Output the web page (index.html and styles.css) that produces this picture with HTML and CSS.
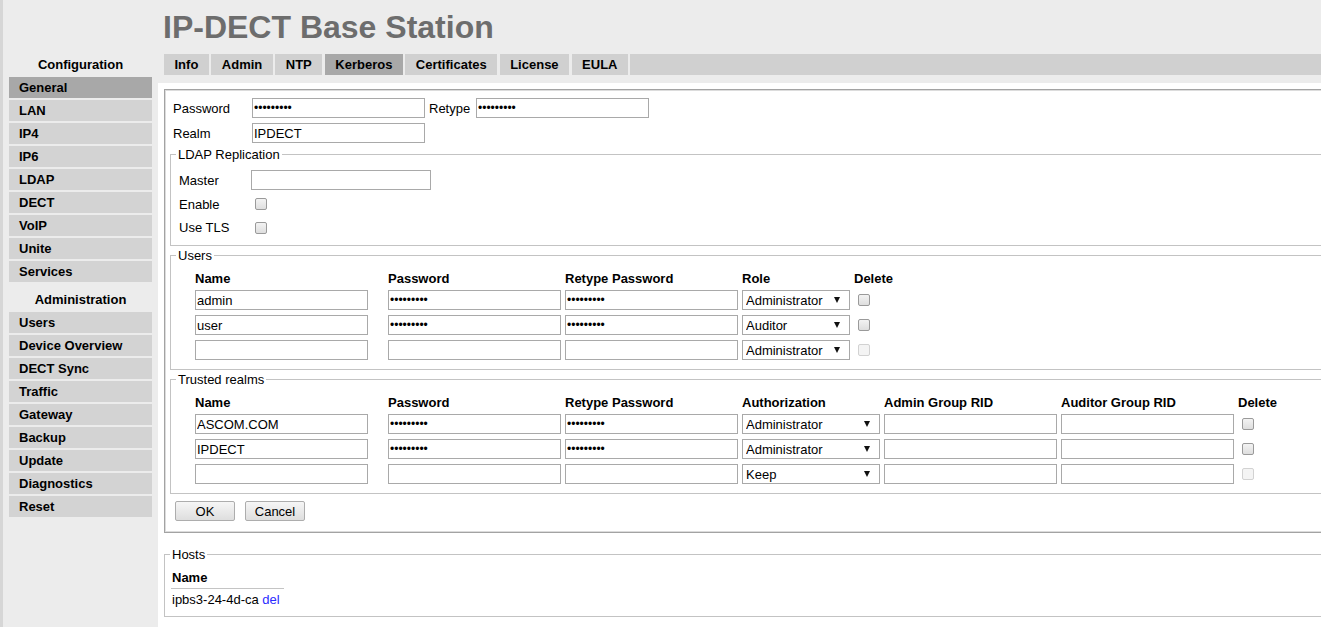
FILE: index.html
```html
<!DOCTYPE html>
<html lang="en">
<head>
<meta charset="utf-8">
<title>IP-DECT Base Station</title>
<link rel="stylesheet" href="styles.css">
</head>
<body>
<div class="page">
  <nav class="sidebar">
    <div class="side-head">Configuration</div>
    <ul class="side-list">
      <li class="active">General</li>
      <li>LAN</li>
      <li>IP4</li>
      <li>IP6</li>
      <li>LDAP</li>
      <li>DECT</li>
      <li>VoIP</li>
      <li>Unite</li>
      <li>Services</li>
    </ul>
    <div class="side-head second">Administration</div>
    <ul class="side-list">
      <li>Users</li>
      <li>Device Overview</li>
      <li>DECT Sync</li>
      <li>Traffic</li>
      <li>Gateway</li>
      <li>Backup</li>
      <li>Update</li>
      <li>Diagnostics</li>
      <li>Reset</li>
    </ul>
  </nav>
  <main class="main">
    <h1 class="title">IP-DECT Base Station</h1>
    <div class="tabs">
      <div class="tab">Info</div>
      <div class="tab">Admin</div>
      <div class="tab">NTP</div>
      <div class="tab active">Kerberos</div>
      <div class="tab">Certificates</div>
      <div class="tab">License</div>
      <div class="tab">EULA</div>
      <div class="tab-fill"></div>
    </div>
    <div class="content">
      <form class="kbox">
        <div class="cred">
          <span>Password</span>
          <input class="field" type="password" value="secret123">
          <span class="lbl2">Retype</span>
          <input class="field" type="password" value="secret123">
          <span>Realm</span>
          <input class="field" type="text" value="IPDECT">
        </div>
        <fieldset class="ldap">
          <legend>LDAP Replication</legend>
          <div class="ldap-grid">
            <span>Master</span>
            <input class="field master" type="text" value="">
            <span>Enable</span>
            <span><input class="chk" type="checkbox"></span>
            <span>Use TLS</span>
            <span><input class="chk" type="checkbox"></span>
          </div>
        </fieldset>
        <fieldset class="grp">
          <legend>Users</legend>
          <div class="grid users">
            <div class="th">Name</div>
            <div class="th">Password</div>
            <div class="th">Retype Password</div>
            <div class="th">Role</div>
            <div class="th">Delete</div>

            <input class="field" type="text" value="admin">
            <input class="field" type="password" value="secret123">
            <input class="field" type="password" value="secret123">
            <span class="sel w-role"><select><option>Administrator</option><option>Auditor</option></select></span>
            <span><input class="chk" type="checkbox"></span>

            <input class="field" type="text" value="user">
            <input class="field" type="password" value="secret123">
            <input class="field" type="password" value="secret123">
            <span class="sel w-role"><select><option>Auditor</option><option>Administrator</option></select></span>
            <span><input class="chk" type="checkbox"></span>

            <input class="field" type="text" value="">
            <input class="field" type="password" value="">
            <input class="field" type="password" value="">
            <span class="sel w-role"><select><option>Administrator</option><option>Auditor</option></select></span>
            <span><input class="chk" type="checkbox" disabled></span>
          </div>
        </fieldset>
        <fieldset class="grp">
          <legend>Trusted realms</legend>
          <div class="grid realms">
            <div class="th">Name</div>
            <div class="th">Password</div>
            <div class="th">Retype Password</div>
            <div class="th">Authorization</div>
            <div class="th">Admin Group RID</div>
            <div class="th">Auditor Group RID</div>
            <div class="th">Delete</div>

            <input class="field" type="text" value="ASCOM.COM">
            <input class="field" type="password" value="secret123">
            <input class="field" type="password" value="secret123">
            <span class="sel w-auth"><select><option>Administrator</option><option>Auditor</option><option>Keep</option></select></span>
            <input class="field" type="text" value="">
            <input class="field" type="text" value="">
            <span><input class="chk" type="checkbox"></span>

            <input class="field" type="text" value="IPDECT">
            <input class="field" type="password" value="secret123">
            <input class="field" type="password" value="secret123">
            <span class="sel w-auth"><select><option>Administrator</option><option>Auditor</option><option>Keep</option></select></span>
            <input class="field" type="text" value="">
            <input class="field" type="text" value="">
            <span><input class="chk" type="checkbox"></span>

            <input class="field" type="text" value="">
            <input class="field" type="password" value="">
            <input class="field" type="password" value="">
            <span class="sel w-auth"><select><option>Keep</option><option>Administrator</option><option>Auditor</option></select></span>
            <input class="field" type="text" value="">
            <input class="field" type="text" value="">
            <span><input class="chk" type="checkbox" disabled></span>
          </div>
        </fieldset>
        <div class="actions">
          <button type="button" class="btn">OK</button>
          <button type="button" class="btn">Cancel</button>
        </div>
      </form>
      <fieldset class="hosts">
        <legend>Hosts</legend>
        <table class="host-table">
          <thead><tr><th>Name</th></tr></thead>
          <tbody><tr><td>ipbs3-24-4d-ca <a href="#" class="del">del</a></td></tr></tbody>
        </table>
      </fieldset>
    </div>
  </main>
</div>
</body>
</html>
```

FILE: styles.css
```css
* { box-sizing: border-box; }
html, body { margin: 0; height: 100%; }
body {
  background: #ececec;
  font-family: "Liberation Sans", Arial, sans-serif;
  font-size: 13px;
  color: #000;
  overflow: hidden;
}
.page {
  display: flex;
  min-height: 100vh;
  border-left: 3px solid #d6d6d6;
}
.sidebar {
  width: 155px;
  flex: none;
  padding: 54px 6px 0 6px;
}
.side-head {
  font-weight: bold;
  text-align: center;
  line-height: 21px;
  margin-bottom: 2px;
}
.side-head.second { padding-top: 5px; }
.side-list { list-style: none; margin: 0; padding: 0; }
.side-list li {
  height: 21px;
  line-height: 21px;
  padding-left: 10px;
  background: #d3d3d3;
  font-weight: bold;
  margin-bottom: 2px;
}
.side-list li.active { background: #a8a8a8; }

.main {
  flex: 1;
  min-width: 0;
  display: flex;
  flex-direction: column;
  overflow: hidden;
}
.title {
  margin: 0 0 8px;
  padding: 8px 0 0 5px;
  font-size: 32px;
  line-height: 38px;
  color: #6d6d6d;
  font-weight: bold;
}
.tabs {
  display: flex;
  gap: 2.5px;
  padding-left: 6px;
  height: 21px;
}
.tab {
  padding: 0 10.5px;
  line-height: 21px;
  background: #d0d0d0;
  font-weight: bold;
}
.tab.active { background: #a8a8a8; }
.tab-fill { flex: 1; background: #d0d0d0; }

.content {
  flex: 1;
  background: #fff;
  margin-top: 8px;
  padding: 6px 0 0 6px;
}

.kbox {
  border: 1px solid #a3a3a3;
  box-shadow: inset 0 0 0 1px #dcdcdc;
  padding: 8px 0 11px 5px;
  margin: 0 -20px 0 0;
}
.cred {
  display: grid;
  grid-template-columns: 79px 173px 51px 173px;
  row-gap: 5px;
  align-items: center;
  padding-left: 3px;
}
.cred .lbl2 { padding-left: 4px; }

fieldset {
  margin: 0 -20px 0 0;
  padding: 0;
  border: 1px solid #c3c3c3;
  min-width: 0;
}
legend {
  padding: 0 2px;
  margin-left: 5px;
  line-height: 15px;
}
.field {
  display: block;
  height: 20px;
  margin: 0;
  padding: 0 1px;
  border: 1px solid #a9a9a9;
  background: #fff;
  font-family: inherit;
  font-size: 13px;
  color: #000;
  width: 173px;
  outline: none;
}
.field[type="password"] { font-size: 12px; }
.field.master { width: 180px; }

.chk {
  -webkit-appearance: none;
  appearance: none;
  display: block;
  width: 12px;
  height: 12px;
  margin: 0 0 0 4px;
  border: 1px solid #9a9a9a;
  border-radius: 2px;
  background: linear-gradient(#f3f3f3, #dedede);
}
.chk:disabled {
  border-color: #d2d2d2;
  background: #f4f4f4;
}

.ldap {
  margin-top: 4px;
  padding: 6px 0 6px 0;
}
.ldap-grid {
  display: grid;
  grid-template-columns: 72px 180px;
  grid-template-rows: 24px 24px 23px;
  align-items: center;
  padding-left: 8px;
}

.grp {
  margin-top: 2px;
  padding: 2px 0 9px 0;
}
.grid {
  display: grid;
  row-gap: 5px;
  align-items: center;
  padding-left: 24px;
}
.users { grid-template-columns: 193px 177px 177px 112px auto; }
.realms { grid-template-columns: 193px 177px 177px 142px 177px 177px auto; }
.th {
  height: 20px;
  display: flex;
  align-items: flex-end;
  line-height: 13px;
  font-weight: bold;
}

.sel {
  position: relative;
  display: block;
  height: 20px;
}
.sel select {
  -webkit-appearance: none;
  appearance: none;
  display: block;
  width: 100%;
  height: 20px;
  margin: 0;
  padding: 0 0 0 3px;
  border: 1px solid #a9a9a9;
  border-radius: 0;
  background: #fff;
  font-family: inherit;
  font-size: 13px;
  color: #000;
  outline: none;
}
.sel::after {
  content: "";
  position: absolute;
  right: 10px;
  top: 7px;
  border-left: 3.5px solid transparent;
  border-right: 3.5px solid transparent;
  border-top: 6px solid #111;
  pointer-events: none;
}
.w-role { width: 108px; }
.w-auth { width: 138px; }

.actions {
  display: flex;
  gap: 10px;
  margin: 7px 0 0 5px;
}
.btn {
  width: 60px;
  height: 20px;
  margin: 0;
  padding: 0;
  border: 1px solid #adadad;
  border-radius: 2px;
  background: linear-gradient(#f6f6f6, #dedede);
  font-family: inherit;
  font-size: 13px;
  color: #000;
}

.hosts {
  margin-top: 14px;
  padding: 5px 0 6px 0;
}
.host-table {
  border-collapse: collapse;
  width: 113px;
  margin-left: 6px;
}
.host-table th {
  text-align: left;
  font-weight: bold;
  padding: 3px 1px;
  line-height: 15px;
  border-bottom: 1px solid #c4c4c4;
}
.host-table td {
  padding: 3px 1px;
  line-height: 15px;
}
.del { color: #2b2bff; text-decoration: none; }
```
